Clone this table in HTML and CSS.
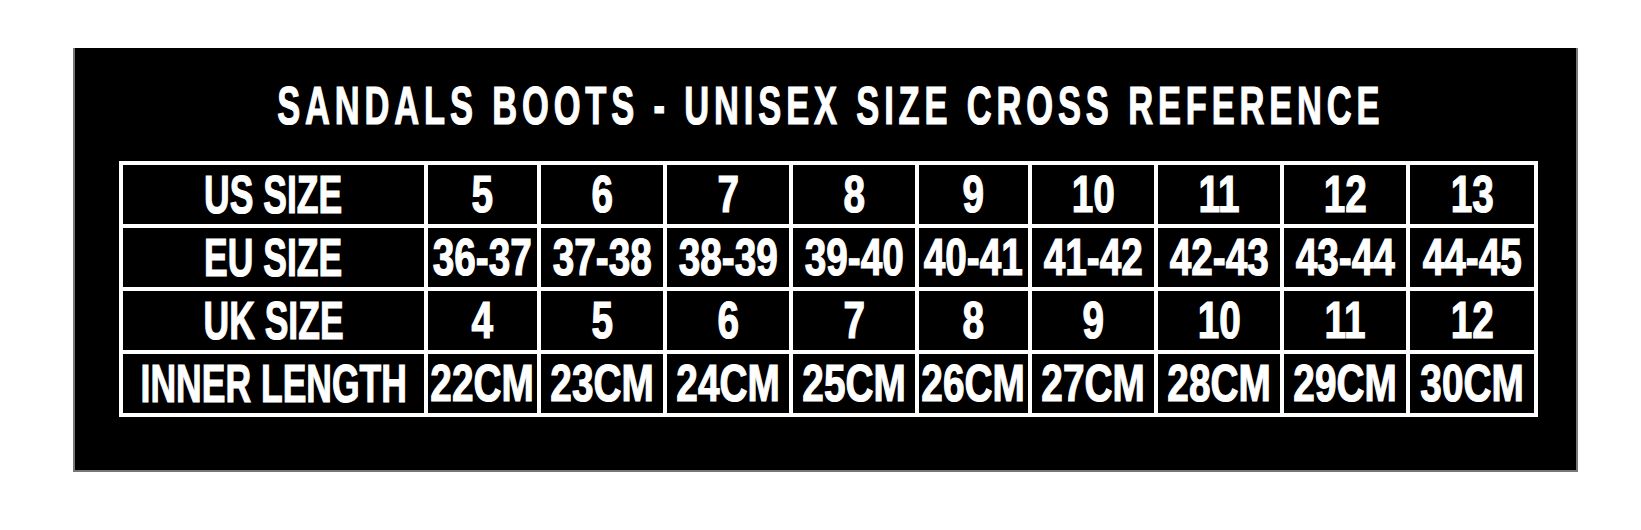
FILE: index.html
```html
<!DOCTYPE html>
<html lang="en">
<head>
<meta charset="utf-8">
<title>Sandals Boots - Unisex Size Cross Reference</title>
<link rel="stylesheet" href="styles.css">
</head>
<body>
<div class="panel">
  <div class="title"><span>SANDALS BOOTS - UNISEX SIZE CROSS REFERENCE</span></div>
  <div class="chart">
    <div class="cell label"><span>US SIZE</span></div>
    <div class="cell"><span>5</span></div>
    <div class="cell"><span>6</span></div>
    <div class="cell"><span>7</span></div>
    <div class="cell"><span>8</span></div>
    <div class="cell"><span>9</span></div>
    <div class="cell"><span>10</span></div>
    <div class="cell"><span>11</span></div>
    <div class="cell"><span>12</span></div>
    <div class="cell"><span>13</span></div>

    <div class="cell label"><span>EU SIZE</span></div>
    <div class="cell"><span>36-37</span></div>
    <div class="cell"><span>37-38</span></div>
    <div class="cell"><span>38-39</span></div>
    <div class="cell"><span>39-40</span></div>
    <div class="cell"><span>40-41</span></div>
    <div class="cell"><span>41-42</span></div>
    <div class="cell"><span>42-43</span></div>
    <div class="cell"><span>43-44</span></div>
    <div class="cell"><span>44-45</span></div>

    <div class="cell label"><span>UK SIZE</span></div>
    <div class="cell"><span>4</span></div>
    <div class="cell"><span>5</span></div>
    <div class="cell"><span>6</span></div>
    <div class="cell"><span>7</span></div>
    <div class="cell"><span>8</span></div>
    <div class="cell"><span>9</span></div>
    <div class="cell"><span>10</span></div>
    <div class="cell"><span>11</span></div>
    <div class="cell"><span>12</span></div>

    <div class="cell label"><span>INNER LENGTH</span></div>
    <div class="cell"><span>22CM</span></div>
    <div class="cell"><span>23CM</span></div>
    <div class="cell"><span>24CM</span></div>
    <div class="cell"><span>25CM</span></div>
    <div class="cell"><span>26CM</span></div>
    <div class="cell"><span>27CM</span></div>
    <div class="cell"><span>28CM</span></div>
    <div class="cell"><span>29CM</span></div>
    <div class="cell"><span>30CM</span></div>
  </div>
</div>
</body>
</html>
```
FILE: styles.css
```css
html, body {
  margin: 0;
  background: #fff;
}

body {
  padding: 48px 0 0 73px;
  font-family: "Liberation Sans", Arial, sans-serif;
  font-weight: bold;
}

.panel {
  box-sizing: border-box;
  width: 1505px;
  height: 424px;
  background: #000;
  border: 2px solid #777;
  border-top: 0;
  padding-top: 28px;
}

.title {
  display: flex;
  justify-content: center;
  height: 60px;
  line-height: 60px;
  font-size: 53px;
  color: #fff;
  padding-left: 10px;
  margin-bottom: 25px;
}

.title span {
  display: block;
  white-space: nowrap;
  letter-spacing: 7.5px;
  -webkit-text-stroke: 1.2px #fff;
  transform: scaleX(0.65);
}

.chart {
  display: grid;
  grid-template-columns: 301px 109px 122px 122px 122px 109px 122px 122px 122px 124px;
  grid-auto-rows: 59px;
  gap: 4px;
  padding: 4px;
  background: #fff;
  width: max-content;
  margin-left: 44px;
}

.cell {
  background: #000;
  color: #fff;
  display: flex;
  align-items: center;
  justify-content: center;
  font-size: 51px;
  line-height: 1;
}

.cell span {
  display: block;
  white-space: nowrap;
  -webkit-text-stroke: 1.2px #fff;
  transform: scaleX(0.76);
}

.label {
  font-size: 53px;
}

.label span {
  transform: scaleX(0.67);
}
```
